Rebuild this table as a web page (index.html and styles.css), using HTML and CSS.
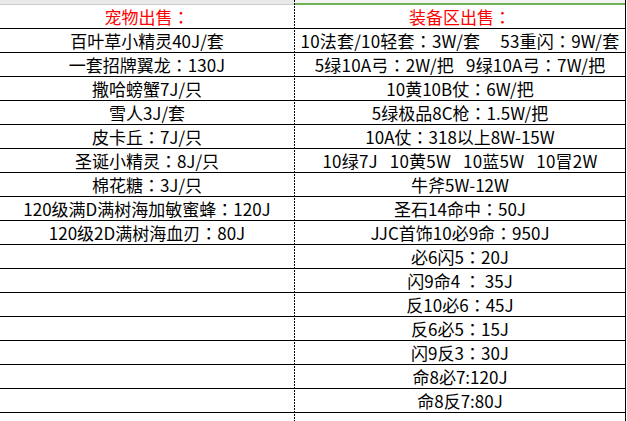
FILE: index.html
```html
<!DOCTYPE html>
<html lang="zh-CN">
<head>
<meta charset="utf-8">
<title>出售</title>
<link rel="stylesheet" href="styles.css">
</head>
<body>
<div class="sheet">
  <div class="col col-left">
    <div class="strip strip-left"></div>
    <div class="cell head">宠物出售<span class="fw">：</span></div>
    <div class="cell">百叶草小精灵40J/套</div>
    <div class="cell">一套招牌翼龙<span class="fw">：</span>130J</div>
    <div class="cell">撒哈螃蟹7J/只</div>
    <div class="cell">雪人3J/套</div>
    <div class="cell">皮卡丘<span class="fw">：</span>7J/只</div>
    <div class="cell">圣诞小精灵<span class="fw">：</span>8J/只</div>
    <div class="cell">棉花糖<span class="fw">：</span>3J/只</div>
    <div class="cell">120级满D满树海加敏蜜蜂<span class="fw">：</span>120J</div>
    <div class="cell">120级2D满树海血刃<span class="fw">：</span>80J</div>
    <div class="cell"></div>
    <div class="cell"></div>
    <div class="cell"></div>
    <div class="cell"></div>
    <div class="cell"></div>
    <div class="cell"></div>
    <div class="cell"></div>
    <div class="cell"></div>
  </div>
  <div class="col col-right">
    <div class="strip strip-right"></div>
    <div class="cell head">装备区出售<span class="fw">：</span></div>
    <div class="cell wide">10法套/10轻套<span class="fw">：</span>3W/套&nbsp;&nbsp;&nbsp;&nbsp;&nbsp;53重闪<span class="fw">：</span>9W/套</div>
    <div class="cell wide">5绿10A弓<span class="fw">：</span>2W/把&nbsp;&nbsp;&nbsp;9绿10A弓<span class="fw">：</span>7W/把</div>
    <div class="cell">10黄10B仗<span class="fw">：</span>6W/把</div>
    <div class="cell">5绿极品8C枪<span class="fw">：</span>1.5W/把</div>
    <div class="cell">10A仗<span class="fw">：</span>318以上8W-15W</div>
    <div class="cell wide">10绿7J&nbsp;&nbsp;&nbsp;10黄5W&nbsp;&nbsp;&nbsp;10蓝5W&nbsp;&nbsp;&nbsp;10冒2W</div>
    <div class="cell">牛斧5W-12W</div>
    <div class="cell">圣石14命中<span class="fw">：</span>50J</div>
    <div class="cell">JJC首饰10必9命<span class="fw">：</span>950J</div>
    <div class="cell">必6闪5<span class="fw">：</span>20J</div>
    <div class="cell">闪9命4&nbsp;<span class="fw">：</span>&nbsp;35J</div>
    <div class="cell">反10必6<span class="fw">：</span>45J</div>
    <div class="cell">反6必5<span class="fw">：</span>15J</div>
    <div class="cell">闪9反3<span class="fw">：</span>30J</div>
    <div class="cell">命8必7:120J</div>
    <div class="cell">命8反7:80J</div>
    <div class="cell"></div>
  </div>
</div>
</body>
</html>
```

FILE: styles.css
```css
html, body {
  margin: 0;
  padding: 0;
  background: #fff;
}

body {
  width: 627px;
  height: 421px;
  overflow: hidden;
  font-family: "Noto Sans CJK SC", "Noto Sans", sans-serif;
  font-size: 17px;
  color: #000;
}

.sheet {
  display: grid;
  grid-template-columns: 295px 331px;
}

.col {
  display: flex;
  flex-direction: column;
}

.col-left {
  background-image: repeating-linear-gradient(to bottom, #000 0 2px, transparent 2px 3px);
  background-size: 1px 100%;
  background-position: right top;
  background-repeat: no-repeat;
}

.col-right {
  border-right: 1px solid #000;
}

.strip {
  height: 4px;
  flex: none;
}

.strip-left {
  width: 294px;
  background: #e9e9e9;
  border-bottom: 1px solid #cccccc;
}

.strip-right {
  height: 3px;
  background: #f4f4f4;
  border-bottom: 2px solid #74b152;
}

.cell {
  flex: none;
  height: 23px;
  border-bottom: 1px solid #000;
  display: flex;
  align-items: center;
  justify-content: center;
  white-space: nowrap;
  line-height: 23px;
}

.wide {
  letter-spacing: 0.2px;
}

.col-left .cell {
  width: 294px;
}

.head {
  color: #f00;
}

.fw {
  font-family: "Noto Sans CJK TC", "Noto Sans CJK SC", sans-serif;
}
```
